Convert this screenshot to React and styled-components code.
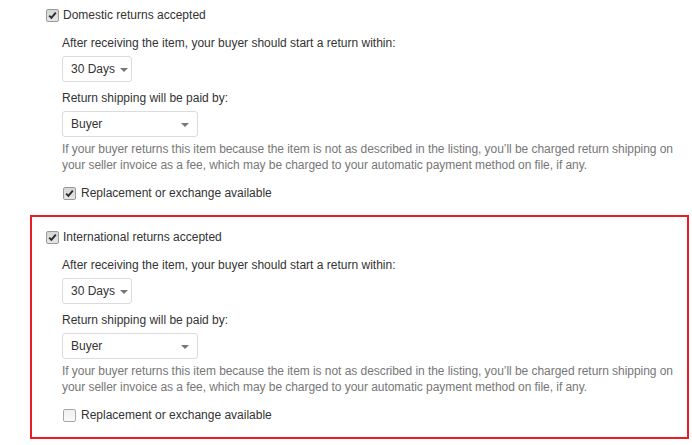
import React from "react";
import styled, { createGlobalStyle } from "styled-components";

const Global = createGlobalStyle`
  html, body { margin: 0; padding: 0; background: #fff; }
  body { font-family: "Liberation Sans", Arial, sans-serif; font-size: 12px; color: #333; }
`;

const Page = styled.div`
  width: 692px;
  height: 445px;
  overflow: hidden;
  padding: 0 3px 0 30px;
  box-sizing: border-box;
`;

const Section = styled.section`
  border: 2px solid ${(p) => (p.$highlight ? "#ec1c24" : "transparent")};
  padding: ${(p) => (p.$highlight ? "12px 14px 13px" : "7px 14px 11px")};
  margin-top: ${(p) => (p.$highlight ? "0" : "-2px")};
`;

const CheckRow = styled.label`
  display: flex;
  align-items: center;
  gap: ${(p) => (p.$inner ? "5px" : "4px")};
  line-height: 17px;
  color: #333;
  white-space: nowrap;
  margin-left: ${(p) => (p.$inner ? "1px" : "0")};
`;

const Box = styled.span`
  width: 11px;
  height: 11px;
  border: 1px solid ${(p) => (p.$checked ? "#9a9a9a" : "#a8a8a8")};
  border-radius: 2px;
  background: ${(p) =>
    p.$checked
      ? "linear-gradient(#d6d6d6, #e6e6e6)"
      : "linear-gradient(#f0f0f0, #fafafa)"};
  display: flex;
  align-items: center;
  justify-content: center;
  flex: none;
`;

const Indent = styled.div`
  padding-left: 16px;
`;

const Label = styled.div`
  line-height: 17px;
  margin-top: ${(p) => p.$mt || 0}px;
`;

const Select = styled.div`
  display: inline-flex;
  align-items: center;
  justify-content: space-between;
  gap: 5px;
  box-sizing: border-box;
  height: 26px;
  width: ${(p) => p.$w}px;
  padding: 0 8px 0 8px;
  border: 1px solid #dcdcdc;
  border-radius: 3px;
  background: #fff;
  color: #333;
  font-size: 12px;
  white-space: nowrap;
`;

const Caret = styled.span`
  width: 0;
  height: 0;
  border-left: 4px solid transparent;
  border-right: 4px solid transparent;
  border-top: 4px solid #777;
  margin-top: 1px;
  flex: none;
`;

const Note = styled.p`
  margin: 4px 0 0;
  width: 625px;
  line-height: 16px;
  color: #777;
  letter-spacing: -0.05px;
`;

const Spacer = styled.div`
  height: 12px;
`;

const SelectRow = styled.div`
  display: flex;
  height: 26px;
  margin-top: 4px;
`;

function Check({ checked }) {
  return (
    <Box $checked={checked}>
      {checked && (
        <svg width="9" height="9" viewBox="0 0 9 9">
          <path d="M1.2 4.6 L3.4 6.9 L7.8 1.6" fill="none" stroke="#2b2b2b" strokeWidth="1.9" />
        </svg>
      )}
    </Box>
  );
}

function ReturnsBlock({ title, highlight, replacement }) {
  return (
    <Section $highlight={highlight}>
      <CheckRow>
        <Check checked />
        <span>{title}</span>
      </CheckRow>
      <Indent>
        <Label $mt={11}>After receiving the item, your buyer should start a return within:</Label>
        <SelectRow>
          <Select $w={70}>
            <span>30 Days</span>
            <Caret />
          </Select>
        </SelectRow>
        <Label $mt={8}>Return shipping will be paid by:</Label>
        <SelectRow>
          <Select $w={136}>
            <span>Buyer</span>
            <Caret />
          </Select>
        </SelectRow>
        <Note>
          If your buyer returns this item because the item is not as described in the listing, you’ll be charged return shipping on your seller invoice as a fee, which may be charged to your automatic payment method on file, if any.
        </Note>
        <Spacer />
        <CheckRow $inner>
          <Check checked={replacement} />
          <span>Replacement or exchange available</span>
        </CheckRow>
      </Indent>
    </Section>
  );
}

export default function App() {
  return (
    <Page>
      <Global />
      <ReturnsBlock title="Domestic returns accepted" replacement />
      <ReturnsBlock title="International returns accepted" highlight replacement={false} />
    </Page>
  );
}
